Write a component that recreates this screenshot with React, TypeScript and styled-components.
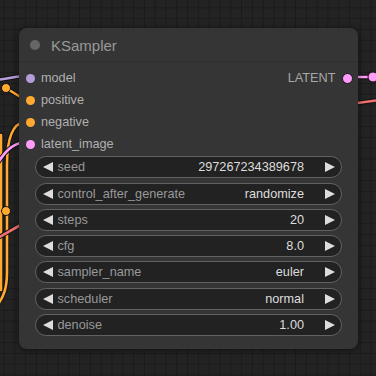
import styled, { createGlobalStyle } from "styled-components";

const GlobalStyle = createGlobalStyle`
  html, body {
    margin: 0;
    padding: 0;
    background: #222;
  }
  body {
    font-family: "Liberation Sans", Arial, sans-serif;
  }
`;

const Canvas = styled.div`
  position: relative;
  width: 376px;
  height: 376px;
  overflow: hidden;
  box-sizing: border-box;
  padding: 28px 0 0 19px;
  background-color: #232323;
  background-image:
    linear-gradient(to right, #1b1b1b 1px, transparent 1px),
    linear-gradient(to bottom, #1b1b1b 1px, transparent 1px);
  background-size: 10.8px 10.8px;
  background-position: 3.5px 7.4px;
`;

const Wires = styled.svg`
  position: absolute;
  left: 0;
  top: 0;
  width: 376px;
  height: 376px;
  pointer-events: none;
`;

const Node = styled.div`
  position: relative;
  width: 339px;
  height: 321px;
  box-sizing: border-box;
  background: #353535;
  border-radius: 8px;
  box-shadow: 0 1px 6px rgba(0, 0, 0, 0.55);
  display: flex;
  flex-direction: column;
`;

const TitleBar = styled.div`
  height: 34px;
  box-sizing: border-box;
  border-bottom: 1px solid #2f2f2f;
  display: flex;
  align-items: center;
  padding-left: 11px;
  gap: 11px;
`;

const TitleDot = styled.span`
  width: 10px;
  height: 10px;
  border-radius: 50%;
  background: #666;
`;

const Title = styled.span`
  font-size: 15px;
  color: #999;
  line-height: 1;
  margin-top: 1px;
`;

const Slots = styled.div`
  padding-top: 5px;
  display: flex;
  flex-direction: column;
`;

const SlotRow = styled.div`
  height: 22px;
  display: flex;
  align-items: center;
  justify-content: space-between;
  padding: 0 5px 0 6.5px;
`;

const Slot = styled.div<{ $out?: boolean }>`
  display: flex;
  align-items: center;
  gap: 6.5px;
  flex-direction: ${({ $out }) => ($out ? "row-reverse" : "row")};
  font-size: 12.7px;
  color: ${({ $out }) => ($out ? "#a8a8a8" : "#b0b0b0")};
`;

const SlotDot = styled.span<{ $color: string; $ring?: boolean }>`
  width: 9px;
  height: 9px;
  box-sizing: content-box;
  border-radius: 50%;
  background: ${({ $color }) => $color};
  border: ${({ $ring }) => ($ring ? "1px solid #151515" : "none")};
`;

const Widgets = styled.div`
  margin-top: 1.3px;
  padding: 0 16px;
  display: flex;
  flex-direction: column;
  gap: 4.3px;
`;

const Widget = styled.div`
  height: 22px;
  box-sizing: border-box;
  border: 1px solid #616161;
  border-radius: 11px;
  background: #222;
  display: flex;
  align-items: center;
  padding: 0 6px 0 6.5px;
  font-size: 12.7px;
`;

const Arrow = styled.span<{ $dir: "left" | "right" }>`
  width: 0;
  height: 0;
  border-top: 5.2px solid transparent;
  border-bottom: 5.2px solid transparent;
  ${({ $dir }) =>
    $dir === "left"
      ? "border-right: 10px solid #ddd;"
      : "border-left: 10px solid #ddd;"}
`;

const Label = styled.span`
  flex: 1;
  color: #999;
  margin-left: 5px;
  white-space: nowrap;
`;

const Value = styled.span`
  color: #ddd;
  margin-right: 21px;
  white-space: nowrap;
`;

const inputs = [
  { name: "model", color: "#b39ddb" },
  { name: "positive", color: "#ffa931" },
  { name: "negative", color: "#ffa931" },
  { name: "latent_image", color: "#ff9cf9" },
];

const widgets = [
  ["seed", "297267234389678"],
  ["control_after_generate", "randomize"],
  ["steps", "20"],
  ["cfg", "8.0"],
  ["sampler_name", "euler"],
  ["scheduler", "normal"],
  ["denoise", "1.00"],
];

function Wire({ d, color }: { d: string; color: string }) {
  return (
    <g fill="none" strokeLinecap="round">
      <path d={d} stroke="#111" strokeWidth={4.5} />
      <path d={d} stroke={color} strokeWidth={2.6} />
    </g>
  );
}

export default function App() {
  return (
    <>
      <GlobalStyle />
      <Canvas>
        <Wires viewBox="0 0 376 376">
          <Wire d="M -4 80 C 6 79, 12 77, 24 76" color="#b39ddb" />
          <Wire d="M 6 88 L 22 98" color="#ffa931" />
          <Wire d="M 1 135 C 1 150, 1 200, 1 290" color="#ffa931" />
          <Wire d="M 24 122 C 12 124, 7 140, 7 165 L 7 272 C 7 288, 4 296, -3 306" color="#ffa931" />
          <Wire d="M 24 142 C 12 144, 4 152, -4 166" color="#ff9cf9" />
          <Wire d="M 24 223 L -4 239" color="#f07070" />
          <Wire d="M 350 77 L 376 77" color="#ff9cf9" />
          <Wire d="M 350 104 L 380 100" color="#f07070" />
          <circle cx={6} cy={88} r={4.5} fill="#ffa931" stroke="#111" strokeWidth={1} />
          <circle cx={6} cy={211} r={4.5} fill="#ffa931" stroke="#111" strokeWidth={1} />
          <circle cx={373} cy={77} r={5} fill="#ff9cf9" stroke="#111" strokeWidth={1} />
        </Wires>
        <Node>
          <TitleBar>
            <TitleDot />
            <Title>KSampler</Title>
          </TitleBar>
          <Slots>
            {inputs.map((s, i) => (
              <SlotRow key={s.name}>
                <Slot>
                  <SlotDot $color={s.color} />
                  {s.name}
                </Slot>
                {i === 0 && (
                  <Slot $out>
                    <SlotDot $color="#ff9cf9" $ring />
                    LATENT
                  </Slot>
                )}
              </SlotRow>
            ))}
          </Slots>
          <Widgets>
            {widgets.map(([label, value]) => (
              <Widget key={label}>
                <Arrow $dir="left" />
                <Label>{label}</Label>
                <Value>{value}</Value>
                <Arrow $dir="right" />
              </Widget>
            ))}
          </Widgets>
        </Node>
      </Canvas>
    </>
  );
}
